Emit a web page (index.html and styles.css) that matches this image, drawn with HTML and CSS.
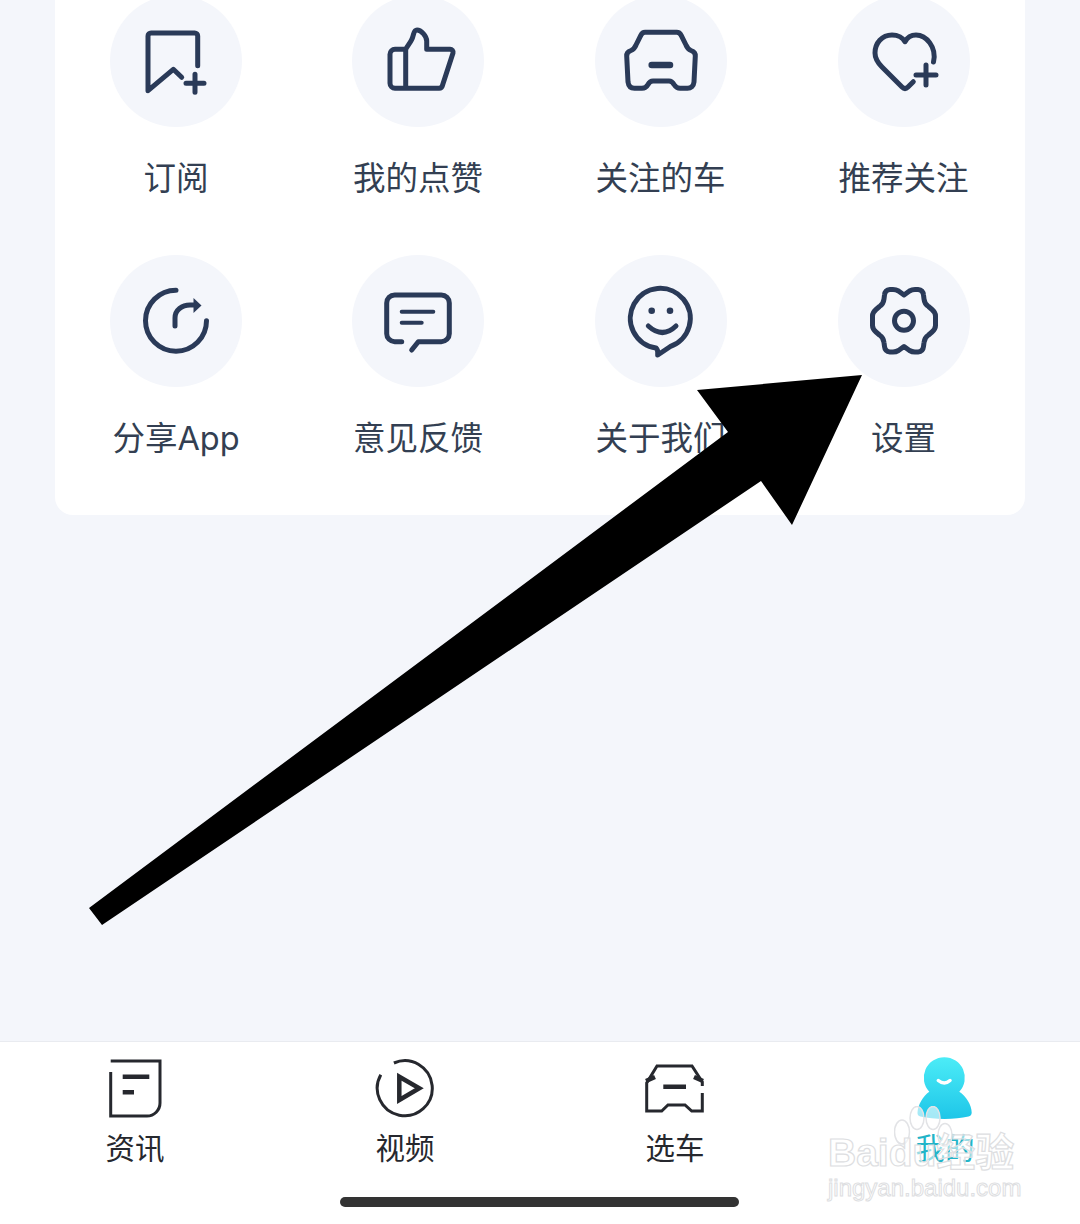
FILE: index.html
```html
<!DOCTYPE html>
<html lang="zh-CN">
<head>
    <meta charset="UTF-8">
    <meta name="viewport" content="width=device-width, initial-scale=1.0">
    <title>我的</title>
    <link rel="stylesheet" href="styles.css">
</head>
<body>

    <div class="page">
        <main class="content">
            <section class="card">
                <div class="item">
                    <div class="circle">
                        <svg class="icon" viewBox="0 0 132 132">
                            <path d="M87.7 70.7V41a3 3 0 0 0-3-3H41a3 3 0 0 0-3 3v54.7L63.3 74.3l8.4 8"/>
                            <path d="M76 88.3h18M85 79.3v18"/>
                        </svg>
                    </div>
                    <span class="label">订阅</span>
                </div>
                <div class="item">
                    <div class="circle">
                        <svg class="icon" viewBox="0 0 132 132">
                            <path d="M53.7 54.3H43a5 5 0 0 0-5 5v29a5 5 0 0 0 5 5h44a4 4 0 0 0 3.5-3L101 58a3 3 0 0 0-3-3.700H74.700V46C74.700 41 69 35 65 35c-3 0-3 3-4 6-1 5-5 9-7.300 13.300v39"/>
                        </svg>
                    </div>
                    <span class="label">我的点赞</span>
                </div>
                <div class="item">
                    <div class="circle">
                        <svg class="icon" viewBox="0 0 132 132">
                            <path d="M50 37.300h31.700c2 0 3.500 1 4.500 3L91 50c1 2.500 2.500 4.500 5 5.500 3 1 4.500 2.500 4.300 5.500L99 87c-.4 4-3 6.300-6.500 6.300H85c-3 0-4.500-1.500-6-3.800-1.300-2.300-2.700-3.500-5-3.500H58c-2.500 0-3.800 1.200-5 3.500-1.300 2.300-3 3.800-6 3.800h-7.500c-3.500 0-6-2.300-6.500-6.300L31.700 61c-.2-3 1.300-4.500 4.300-5.500 2.500-1 4-3 5-5.500l4.800-9.700c1-2 2.200-3 4.200-3z"/>
                            <path class="thick" d="M56.700 70H75"/>
                        </svg>
                    </div>
                    <span class="label">关注的车</span>
                </div>
                <div class="item">
                    <div class="circle">
                        <svg class="icon" viewBox="0 0 132 132">
                            <path d="M95.500 67C99 52 88 40 78 40c-5 0-9 3-11 6.700C65 43 60 40 54 40c-10 0-17 8-17 18 0 6 3 10 7 14l20 20q3 3 6 0l5.300-5.300"/>
                            <path d="M78 80h20M88 70v20"/>
                        </svg>
                    </div>
                    <span class="label">推荐关注</span>
                </div>
                <div class="item">
                    <div class="circle">
                        <svg class="icon" viewBox="0 0 132 132">
                            <path d="M66 35.200A30.500 30.500 0 1 0 96.500 65.700"/>
                            <path d="M65 71v-8c0-8 7-13 15-13h5"/>
                            <path class="fill" d="M83.500 43l8 7.500-8 7.500z"/>
                        </svg>
                    </div>
                    <span class="label">分享App</span>
                </div>
                <div class="item">
                    <div class="circle">
                        <svg class="icon" viewBox="0 0 132 132">
                            <path d="M49.700 86.700h-7a8 8 0 0 1-8-8V48a8 8 0 0 1 8-8h46.600a8 8 0 0 1 8 8v30.700a8 8 0 0 1-8 8h-23L59.700 95"/>
                            <path class="thin" d="M49.700 56.700h31.600M49.700 67.700h20"/>
                        </svg>
                    </div>
                    <span class="label">意见反馈</span>
                </div>
                <div class="item">
                    <div class="circle">
                        <svg class="icon" viewBox="0 0 132 132">
                            <path d="M75 91.700A30 30 0 1 0 61 93q2.300 2 1.700 7z"/>
                            <path d="M53.300 71Q67.500 84 81 71"/>
                            <circle class="fill" cx="56.700" cy="55.700" r="3.300"/>
                            <circle class="fill" cx="75" cy="55.700" r="3.300"/>
                        </svg>
                    </div>
                    <span class="label">关于我们</span>
                </div>
                <div class="item">
                    <div class="circle">
                        <svg class="icon" viewBox="0 0 132 132">
                            <path d="M66 40L71.500 36Q74 34.500 77 34.500H80Q85 35 85.500 40L86 44Q86.500 49 90.500 51.500L94 54.500Q97.500 57.500 97.500 61V70.500Q97.500 74 94 77L90.500 80Q86.500 82.500 86 87.500L85.500 91.500Q85 96.500 80 97H77Q74 97 71.500 95.500L66 91.500 60.500 95.500Q58 97 55 97H52Q47 96.500 46.500 91.500L46 87.500Q45.500 82.500 41.500 80L38 77Q34.500 74 34.500 70.500V61Q34.500 57.500 38 54.500L41.500 51.500Q45.500 49 46 44L46.500 40Q47 35 52 34.500H55Q58 34.500 60.500 36z"/>
                            <circle cx="66" cy="65.700" r="9.500"/>
                        </svg>
                    </div>
                    <span class="label">设置</span>
                </div>
            </section>
        </main>

        <nav class="tabbar">
            <div class="tabs">
                <div class="tab">
                    <svg class="tab-icon" viewBox="0 0 64 64">
                        <path d="M7.700 5H57v42a13 13 0 0 1-13 13H7.700V16"/>
                        <path class="tab-bar" d="M19.700 20.700h26.600M19.700 36.300H31"/>
                    </svg>
                    <span class="tab-label">资讯</span>
                </div>
                <div class="tab">
                    <svg class="tab-icon" viewBox="0 0 64 64">
                        <path d="M20.900 7A27.500 27.500 0 1 1 7.800 18.800"/>
                        <path class="tab-bar" d="M26.300 20.700L46.300 32.300 26.300 44z"/>
                    </svg>
                    <span class="tab-label">视频</span>
                </div>
                <div class="tab">
                    <svg class="tab-icon" viewBox="0 0 64 64">
                        <path d="M59.300 37v18H48.700L42 49H25l-6.300 6H3.700V27L14 10h35l10.300 16v4"/>
                        <path class="tab-bar" d="M3 25l9-4M60 25l-9-4M20.300 30.700H43"/>
                    </svg>
                    <span class="tab-label">选车</span>
                </div>
                <div class="tab">
                    <svg class="tab-icon" viewBox="0 0 64 64">
                        <defs>
                            <linearGradient id="personFill" x1="0" y1="0" x2="0" y2="1">
                                <stop offset="0" stop-color="#4cecf7"/>
                                <stop offset="1" stop-color="#1ec6e8"/>
                            </linearGradient>
                        </defs>
                        <path class="person" d="M31.300 1.200a20.500 20.500 0 0 1 15 34.500C53 40 58.700 49 58.700 56.500c0 2.500-1.200 3.500-3.200 4-7 1.500-15 2.500-24 2.500s-17-1-24-2.500c-2-.5-3.200-1.500-3-4C4.800 49 10 40 16.300 35.700a20.500 20.500 0 0 1 15-34.500z"/>
                        <path class="person-smile" d="M25.300 24.500q6 5 11.700 0"/>
                    </svg>
                    <span class="tab-label tab-label-on">我的</span>
                </div>
            </div>
            <div class="home-bar"></div>
        </nav>

        <!-- big annotation arrow -->
        <svg class="arrow" viewBox="0 0 1080 1224">
            <polygon points="89,908 728,432 697,390 862,375 792,525 761,481 102,925"/>
        </svg>

        <!-- watermark -->
        <div class="watermark">
            <svg class="paw" viewBox="0 0 70 60">
                <ellipse cx="8" cy="26" rx="7.500" ry="12"/>
                <ellipse cx="23" cy="12" rx="7" ry="11.500"/>
                <ellipse cx="39" cy="12" rx="7" ry="11.500"/>
                <ellipse cx="51" cy="29" rx="7" ry="11.500"/>
            </svg>
            <div class="wm-main">Baidu经验</div>
            <div class="wm-sub">jingyan.baidu.com</div>
        </div>
    </div>

</body>
</html>
```

FILE: styles.css
```css
* {
    box-sizing: border-box;
}

body {
    margin: 0;
    padding: 0;
    font-family: 'Inter', 'Noto Sans CJK SC', sans-serif;
    background: #f4f6fb;
}

.page {
    position: relative;
    width: 1080px;
    height: 1224px;
    overflow: hidden;
}

.content {
    display: flow-root;
    height: 1041px;
    padding: 0 55px;
}

.card {
    display: grid;
    grid-template-columns: 242px 242px 243px 243px;
    row-gap: 54px;
    margin-top: -5px;
    padding-bottom: 54px;
    background: #fff;
    border-radius: 0 0 18px 18px;
}

.item {
    display: flex;
    flex-direction: column;
    align-items: center;
}

.circle {
    width: 132px;
    height: 132px;
    border-radius: 50%;
    background: #f4f6fb;
}

.icon {
    display: block;
    width: 132px;
    height: 132px;
    fill: none;
    stroke: #2a3a58;
    stroke-width: 5;
    stroke-linecap: round;
    stroke-linejoin: round;
}

.icon .thick {
    stroke-width: 6.5;
}

.icon .thin {
    stroke-width: 4;
}

.icon .fill {
    fill: #2a3a58;
    stroke: none;
}

.label {
    margin-top: 30px;
    font-size: 32.500px;
    line-height: 44px;
    color: #333f52;
}

.tabbar {
    height: 183px;
    padding-top: 14px;
    background: #fff;
    border-top: 1px solid #e9ebf0;
}

.tabs {
    display: grid;
    grid-template-columns: repeat(4, 1fr);
}

.tab {
    display: flex;
    flex-direction: column;
    align-items: center;
}

.tab-icon {
    display: block;
    width: 64px;
    height: 64px;
    fill: none;
    stroke: #26282e;
    stroke-width: 3;
}

.tab-icon .tab-bar {
    stroke-width: 4.500;
}

.tab-icon .person {
    fill: url(#personFill);
    stroke: none;
}

.tab-icon .person-smile {
    stroke: #fff;
    stroke-width: 3.500;
    stroke-linecap: round;
}

.tab-label {
    margin-top: 8px;
    font-size: 29.500px;
    line-height: 40px;
    color: #26282e;
}

.tab-label-on {
    color: #22b4c8;
}

.home-bar {
    width: 399px;
    height: 10px;
    margin: 29px 0 0 340px;
    border-radius: 5px;
    background: #333;
}

.arrow {
    position: absolute;
    left: 0;
    top: 0;
    width: 1080px;
    height: 1224px;
    fill: #000;
    pointer-events: none;
}

.watermark {
    position: absolute;
    left: 828px;
    top: 1106px;
    width: 200px;
    height: 100px;
}

.paw {
    position: absolute;
    left: 66px;
    top: 0;
    width: 70px;
    height: 60px;
    fill: rgba(255, 255, 255, 0.6);
    stroke: #e2e3e6;
    stroke-width: 1.500;
}

.wm-main {
    position: absolute;
    left: 0;
    top: 24px;
    font-family: 'Liberation Sans', 'Noto Sans CJK SC', sans-serif;
    font-size: 39px;
    line-height: 46px;
    font-weight: bold;
    white-space: nowrap;
    color: rgba(255, 255, 255, 0.55);
    -webkit-text-stroke: 1.200px #dddee1;
}

.wm-sub {
    position: absolute;
    left: 0;
    top: 66px;
    font-family: 'Liberation Sans', sans-serif;
    font-size: 24px;
    line-height: 32px;
    white-space: nowrap;
    color: rgba(255, 255, 255, 0.55);
    -webkit-text-stroke: 1px #dddee1;
}
```
